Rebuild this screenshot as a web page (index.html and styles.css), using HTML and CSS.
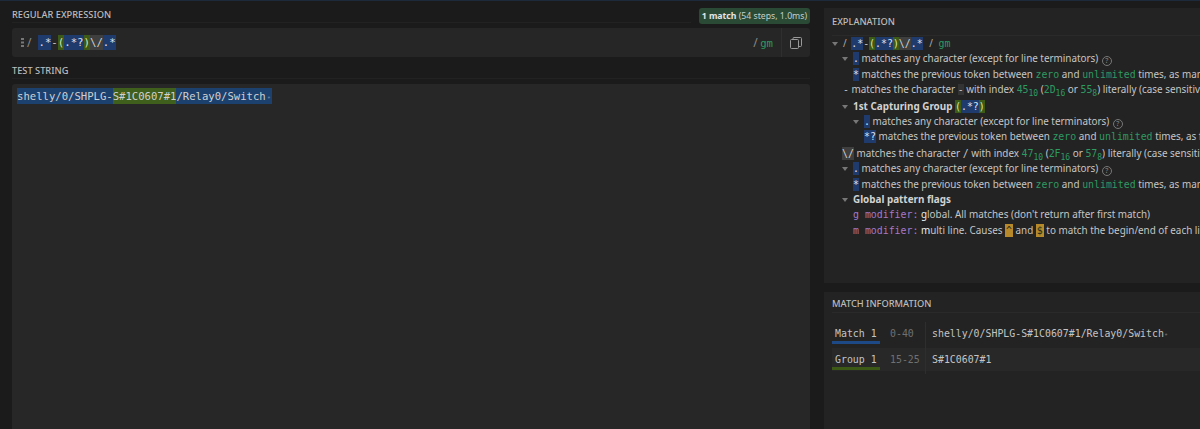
FILE: index.html
```html
<!DOCTYPE html>
<html lang="en">
<head>
<meta charset="utf-8">
<title>Regex</title>
<link rel="stylesheet" href="styles.css">
</head>
<body>
<div class="page">
  <main class="left">
    <div class="head-re">
      <span class="title re-title">REGULAR EXPRESSION</span>
      <span class="badge"><b>1 match</b> (54 steps, 1.0ms)</span>
    </div>
    <div class="regex">
      <svg class="grip" width="3" height="9" viewBox="0 0 3 9"><rect width="3" height="2" y="0"/><rect width="3" height="2" y="3.500"/><rect width="3" height="2" y="7"/></svg>
      <span class="slash">/</span>
      <span class="mono pat"><span class="tb">.*</span>-<span class="tg">(</span><span class="tb">.*?</span><span class="tg">)</span><span class="te">\/</span><span class="tb">.*</span></span>
      <span class="flags"><span class="slash">/</span> <span class="mono gm">gm</span></span>
      <span class="copy">
        <svg width="12" height="12" viewBox="0 0 12 12" fill="none" stroke="#9a9a9a" stroke-width="1"><rect x="0.500" y="2.500" width="8" height="9" rx="1"/><path d="M3 2.500V1.500a1 1 0 0 1 1-1h6.500a1 1 0 0 1 1 1v7a1 1 0 0 1-1 1H8.500"/></svg>
      </span>
    </div>
    <div class="head-test"><span class="title">TEST STRING</span></div>
    <div class="test mono"><span class="mb">shelly/0/SHPLG-</span><span class="mg">S#1C0607#1</span><span class="mb">/Relay0/Switch<i class="nl">&#8226;</i></span></div>
  </main>
  <aside class="right">
    <section class="panel explain">
      <h2 class="title ptitle">EXPLANATION</h2>
      <div class="tree">
        <div class="row l0"><i class="tri"></i><span class="sl">/</span> <span class="mono rootpat"><span class="tb">.*</span>-<span class="tg">(</span><span class="tb">.*?</span><span class="tg">)</span><span class="te">\/</span><span class="tb">.*</span></span> <span class="sl sl2">/</span> <span class="mono gm rootflags">gm</span></div>
        <div class="row l1"><i class="tri"></i><span class="mono tb">.</span> matches any character (except for line terminators) <i class="help">?</i></div>
        <div class="row l1"><span class="mono tb">*</span> matches the previous token between <span class="mono gm">zero</span> and <span class="mono gm">unlimited</span> times, as many times as possible</div>
        <div class="row l0"><span class="mono">-</span> matches the character <span class="mono dim">-</span> with index <span class="mono gm">45<sub>10</sub></span> (<span class="mono gm">2D<sub>16</sub></span> or <span class="mono gm">55<sub>8</sub></span>) literally (case sensitive)</div>
        <div class="row l1 tall"><i class="tri"></i><b>1st Capturing Group</b> <span class="mono"><span class="tg">(</span><span class="tb">.*?</span><span class="tg">)</span></span></div>
        <div class="row l2"><i class="tri"></i><span class="mono tb">.</span> matches any character (except for line terminators) <i class="help">?</i></div>
        <div class="row l2"><span class="mono tb">*?</span> matches the previous token between <span class="mono gm">zero</span> and <span class="mono gm">unlimited</span> times, as few times as possible</div>
        <div class="row lb tall"><span class="mono te">\/</span> matches the character <span class="mono">/</span> with index <span class="mono gm">47<sub>10</sub></span> (<span class="mono gm">2F<sub>16</sub></span> or <span class="mono gm">57<sub>8</sub></span>) literally (case sensitive)</div>
        <div class="row l1"><i class="tri"></i><span class="mono tb">.</span> matches any character (except for line terminators) <i class="help">?</i></div>
        <div class="row l1"><span class="mono tb">*</span> matches the previous token between <span class="mono gm">zero</span> and <span class="mono gm">unlimited</span> times, as many times as possible</div>
        <div class="row l1"><i class="tri"></i><b>Global pattern flags</b></div>
        <div class="row l1"><span class="mono pu">g modifier:</span> <b class="w">g</b>lobal. All matches (don't return after first match)</div>
        <div class="row l1"><span class="mono pu">m modifier:</span> <b class="w">m</b>ulti line. Causes <span class="mono ye">^</span> and <span class="mono ye">$</span> to match the begin/end of each line (not only begin/end of string)</div>
      </div>
    </section>
    <section class="panel info">
      <h2 class="title ptitle">MATCH INFORMATION</h2>
      <div class="mrow">
        <span class="mono mname ub">Match 1</span><span class="mono range">0-40</span><span class="mono mval">shelly/0/SHPLG-S#1C0607#1/Relay0/Switch<i class="nl2">&#8226;</i></span>
      </div>
      <div class="mrow alt">
        <span class="mono mname ug">Group 1</span><span class="mono range">15-25</span><span class="mono mval">S#1C0607#1</span>
      </div>
    </section>
  </aside>
</div>
</body>
</html>
```
FILE: styles.css
```css
* { box-sizing: border-box; }
html, body { margin: 0; height: 100%; }
body {
  background: #1b1b1b;
  color: #c4c4c4;
  font-family: "Noto Sans", Lato, "Liberation Sans", sans-serif;
  font-size: 9.900px;
  overflow: hidden;
}
.page { display: flex; height: 429px; width: 1200px; border-top: 1px solid #1c2a3c; }
.mono { font-family: "DejaVu Sans Mono", "Liberation Mono", monospace; font-size: 10.6px; }
.title { display: block; font-size: 9.250px; line-height: 13px; font-weight: 500; color: #bcbcbc; margin: 0; }

.left { width: 824px; padding: 0 14px 0 12px; display: flex; flex-direction: column; background: #1b1b1b; }
.head-re { display: flex; align-items: flex-start; height: 27px; }
.re-title { flex: 1; height: 22px; padding-top: 7px; border-bottom: 1px solid #222; margin-right: 8px; }
.badge {
  background: #2a4a36; color: #c4d0c9; border-radius: 3px; font-size: 8.700px; height: 16px; line-height: 16px;
  padding: 0 3px; margin-top: 7px; white-space: nowrap;
}
.badge b { font-weight: 700; color: #e4e4e4; }
.regex {
  height: 29px; background: #262626; border-radius: 3px;
  display: flex; align-items: center; padding-left: 9px; color: #8a8a8a; flex: none;
}
.grip { fill: #777; margin-right: 3px; }
.slash { color: #888; font-size: 12px; }
.pat { margin-left: 7px; color: #c6c6c6; font-size: 10.7px; }
.tb { background: #1f3b6e; color: #d9e2f2; padding: 1px 0; }
.tg { background: #3d5a16; color: #d7e6b8; padding: 1px 0; }
.te { background: #3f3f3f; color: #d0d0d0; padding: 1px 0; }
.gm { color: #2e9a62; }
.flags { margin-left: auto; padding-right: 8px; }
.copy { width: 29px; height: 29px; border-left: 1px solid #2f2f2f; display: flex; align-items: center; justify-content: center; }
.head-test { height: 22px; padding-top: 7px; border-bottom: 1px solid #222; margin-bottom: 5px; flex: none; }
.test {
  flex: 1; background: #272727; border-radius: 3px 3px 0 0; padding: 5px 5px; color: #d0d0d0;
  line-height: 14px;
}
.mb { background: #1d416e; padding: 2px 0; }
.mg { background: #3f5f1c; padding: 2px 0; }
.nl { font-style: normal; color: #5f7a99; font-size: 7px; display: inline-block; width: 6.4px; text-align: center; }

.right { flex: 1; display: flex; flex-direction: column; min-width: 0; overflow: hidden; }
.panel { background: #232323; }
.explain { height: 275px; flex: none; overflow: hidden; padding: 0 0 0 8px; margin-top: 7px; }
.ptitle { padding-top: 7px; border-bottom: 1px solid #2a2a2a; height: 28px; }
.row { line-height: 15.400px; height: 15.400px; white-space: nowrap; color: #c6c6c6; }
.row .mono { font-size: 9.900px; line-height: 13px; }
.row .rootpat { margin-left: 2px; }
.sl2 { margin-left: 4px; }
.row .rootflags { margin-left: 3px; }
.tall { margin-top: 1px; }
.row b { font-weight: 700; color: #d2d2d2; }
.row sub { font-size: 8px; line-height: 0; }
.l0 { padding-left: 11px; }
.l1 { padding-left: 21px; }
.l2 { padding-left: 32px; }
.lb { padding-left: 10px; }
.tri {
  display: inline-block; width: 0; height: 0; border-left: 3px solid transparent; border-right: 3px solid transparent;
  border-top: 4px solid #777; vertical-align: 1px; margin-left: -11px; margin-right: 5px;
}
.sl { color: #aaa; }
.dim { background: #333; }
.help {
  display: inline-block; width: 10px; height: 10px; border: 1px solid #777; border-radius: 50%; font-style: normal; font-size: 7px;
  line-height: 8px; text-align: center; color: #888; margin-left: 1px; vertical-align: -1px;
}
.pu { color: #a878c8; }
.row .w { color: #ededed; font-weight: 400; }
.ye { background: #b8892a; color: #2a2a1c; padding: 1px; }

.info { flex: 1; margin-top: 9px; padding: 0 0 0 8px; }
.info .ptitle { height: 21px; margin-bottom: 9px; padding-top: 5px; }
.mrow { display: flex; height: 23px; align-items: flex-start; margin-bottom: 3px; line-height: 23px; }
.mrow.alt { background: #282828; line-height: 24px; }
.mrow .mono { font-size: 9.900px; }
.mname { width: 48px; padding-left: 3px; color: #c4c4c4; height: 22px; margin-right: 10px; }
.ub { border-bottom: 3px solid #1d4a86; }
.ug { border-bottom: 3px solid #3c5a15; }
.range { width: 36px; color: #707070; height: 26px; border-right: 1px solid #2e2e2e; }
.mval { padding-left: 6px; color: #c4c4c4; }
.nl2 { font-style: normal; color: #666; font-size: 7px; }
```
